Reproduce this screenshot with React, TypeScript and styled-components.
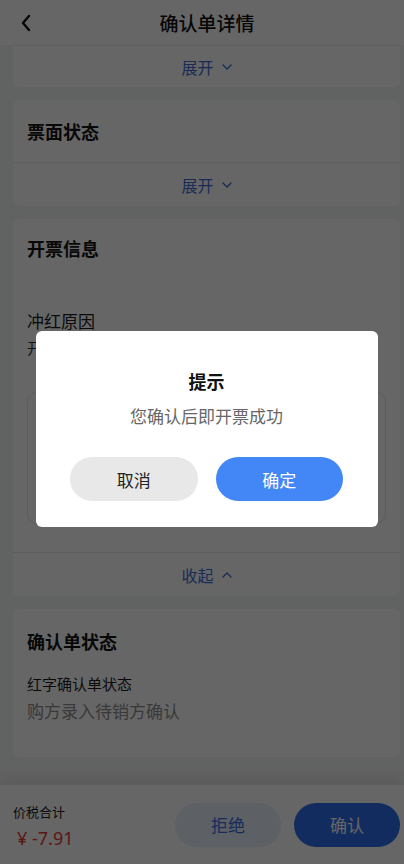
import React from "react";
import styled, { createGlobalStyle } from "styled-components";

const Global = createGlobalStyle`
  html, body { margin: 0; padding: 0; }
  body {
    background: #f3f4f6;
    font-family: "Noto Sans CJK SC", "Noto Sans", sans-serif;
    color: #1a1a1a;
  }
  * { box-sizing: border-box; }
`;

const Page = styled.div`
  width: 404px;
  height: 864px;
  overflow: hidden;
  display: flex;
  flex-direction: column;
  background: #f3f4f6;
  position: relative;
`;

const Header = styled.header`
  height: 45px;
  flex: 0 0 45px;
  background: #ffffff;
  display: grid;
  grid-template-columns: 52px 1fr 52px;
  align-items: center;
`;

const BackBtn = styled.div`
  display: flex;
  align-items: center;
  padding-left: 20px;
  height: 100%;
`;

const Title = styled.h1`
  margin: 0;
  text-align: center;
  font-size: 19px;
  font-weight: 500;
  color: #111;
  padding-left: 10px;
`;

const Scroll = styled.main`
  flex: 1;
  display: flex;
  flex-direction: column;
  gap: 13px;
  padding: 0 4px 0 13px;
  overflow: hidden;
`;

const Card = styled.section`
  background: #ffffff;
  border-radius: 6px;
  display: flex;
  flex-direction: column;
`;

const TopCard = styled(Card)`
  border-radius: 0 0 6px 6px;
`;

const CardHead = styled.div`
  height: 62px;
  display: flex;
  align-items: center;
  padding: 0 14px;
`;

const CardTitle = styled.h2`
  margin: 0;
  font-size: 18px;
  font-weight: 700;
  line-height: 26px;
  color: #141414;
`;

const CardBody = styled.div<{ $pt: number; $pb: number }>`
  padding: ${(p) => p.$pt}px 14px ${(p) => p.$pb}px;
  display: flex;
  flex-direction: column;
`;

const ExpandRow = styled.div<{ $h?: number }>`
  height: ${(p) => p.$h ?? 44}px;
  border-top: 1px solid #e9eaec;
  display: flex;
  align-items: center;
  justify-content: center;
  gap: 8px;
  color: #3d6fd6;
  font-size: 16px;
`;

const FieldLabel = styled.div<{ $mt: number }>`
  margin-top: ${(p) => p.$mt}px;
  font-size: 17px;
  line-height: 24px;
  color: #1a1a1a;
`;

const FieldValue = styled.div`
  margin-top: 4px;
  font-size: 15px;
  line-height: 22px;
  color: #333;
`;

const TextBox = styled.div`
  margin-top: 33px;
  height: 132px;
  border: 1px solid #e3e4e6;
  border-radius: 10px;
`;

const SmallLabel = styled.div`
  margin-top: 19px;
  font-size: 15px;
  line-height: 22px;
  color: #1a1a1a;
`;

const StatusValue = styled.div`
  margin-top: 4px;
  font-size: 17px;
  line-height: 24px;
  color: #8f8f8f;
`;

const Footer = styled.footer`
  height: 79px;
  flex: 0 0 79px;
  background: #ffffff;
  box-shadow: 0 -6px 14px rgba(0, 0, 0, 0.08);
  display: flex;
  align-items: center;
  padding: 0 4px 0 13px;
  gap: 13px;
`;

const Total = styled.div`
  flex: 1;
  display: flex;
  flex-direction: column;
  margin-top: 2px;
`;

const TotalLabel = styled.div`
  font-size: 13px;
  line-height: 20px;
  color: #1a1a1a;
`;

const TotalValue = styled.div`
  margin-top: 4px;
  font-size: 18px;
  line-height: 24px;
  color: #e53935;
  padding-left: 4px;
  font-family: "Noto Sans", "Noto Sans CJK SC", sans-serif;
`;

const FootBtn = styled.button<{ $primary?: boolean }>`
  width: 106px;
  height: 44px;
  border: none;
  border-radius: 22px;
  font-family: inherit;
  font-size: 17px;
  background: ${(p) => (p.$primary ? "#2f6ef0" : "#e8effd")};
  color: ${(p) => (p.$primary ? "#ffffff" : "#3a6fe0")};
`;

const Overlay = styled.div`
  position: absolute;
  inset: 0;
  background: rgba(0, 0, 0, 0.6);
  display: flex;
  align-items: center;
  justify-content: center;
  padding: 0 0 6px 10px;
`;

const Dialog = styled.div`
  width: 342px;
  background: #ffffff;
  border-radius: 6px;
  padding: 37px 35px 26px 34px;
  display: flex;
  flex-direction: column;
  align-items: center;
`;

const DialogTitle = styled.div`
  font-size: 18px;
  font-weight: 700;
  line-height: 26px;
  color: #111;
`;

const DialogMsg = styled.div`
  margin-top: 10px;
  font-size: 17px;
  line-height: 24px;
  color: #666;
`;

const DialogActions = styled.div`
  margin-top: 29px;
  width: 100%;
  display: grid;
  grid-template-columns: 1fr 1fr;
  gap: 18px;
`;

const DialogBtn = styled.button<{ $primary?: boolean }>`
  height: 44px;
  border: none;
  border-radius: 22px;
  font-family: inherit;
  font-size: 17px;
  background: ${(p) => (p.$primary ? "#4287f5" : "#e8e8e8")};
  color: ${(p) => (p.$primary ? "#ffffff" : "#222")};
`;

const Chevron = ({ up }: { up?: boolean }) => (
  <svg width="10" height="6" viewBox="0 0 10 6" fill="none">
    <polyline
      points={up ? "1,5 5,1 9,5" : "1,1 5,5 9,1"}
      stroke="currentColor"
      strokeWidth="1.4"
      strokeLinecap="round"
      strokeLinejoin="round"
    />
  </svg>
);

const Expand = ({ open, h }: { open?: boolean; h?: number }) => (
  <ExpandRow $h={h}>
    <span>{open ? "收起" : "展开"}</span>
    <Chevron up={open} />
  </ExpandRow>
);

export default function App() {
  return (
    <Page>
      <Global />
      <Header>
        <BackBtn>
          <svg width="12" height="18" viewBox="0 0 12 18" fill="none">
            <polyline
              points="9,2 3,9 9,16"
              stroke="#111"
              strokeWidth="2.4"
              strokeLinecap="round"
              strokeLinejoin="round"
            />
          </svg>
        </BackBtn>
        <Title>确认单详情</Title>
        <div />
      </Header>
      <Scroll>
        <TopCard>
          <Expand h={42} />
        </TopCard>
        <Card>
          <CardHead>
            <CardTitle>票面状态</CardTitle>
          </CardHead>
          <Expand />
        </Card>
        <Card>
          <CardBody $pt={16} $pb={28}>
            <CardTitle>开票信息</CardTitle>
            <FieldLabel $mt={48}>冲红原因</FieldLabel>
            <FieldValue>开票有误</FieldValue>
            <TextBox />
          </CardBody>
          <Expand open />
        </Card>
        <Card>
          <CardBody $pt={19} $pb={34}>
            <CardTitle>确认单状态</CardTitle>
            <SmallLabel>红字确认单状态</SmallLabel>
            <StatusValue>购方录入待销方确认</StatusValue>
          </CardBody>
        </Card>
      </Scroll>
      <Footer>
        <Total>
          <TotalLabel>价税合计</TotalLabel>
          <TotalValue>¥ -7.91</TotalValue>
        </Total>
        <FootBtn>拒绝</FootBtn>
        <FootBtn $primary>确认</FootBtn>
      </Footer>
      <Overlay>
        <Dialog>
          <DialogTitle>提示</DialogTitle>
          <DialogMsg>您确认后即开票成功</DialogMsg>
          <DialogActions>
            <DialogBtn>取消</DialogBtn>
            <DialogBtn $primary>确定</DialogBtn>
          </DialogActions>
        </Dialog>
      </Overlay>
    </Page>
  );
}
